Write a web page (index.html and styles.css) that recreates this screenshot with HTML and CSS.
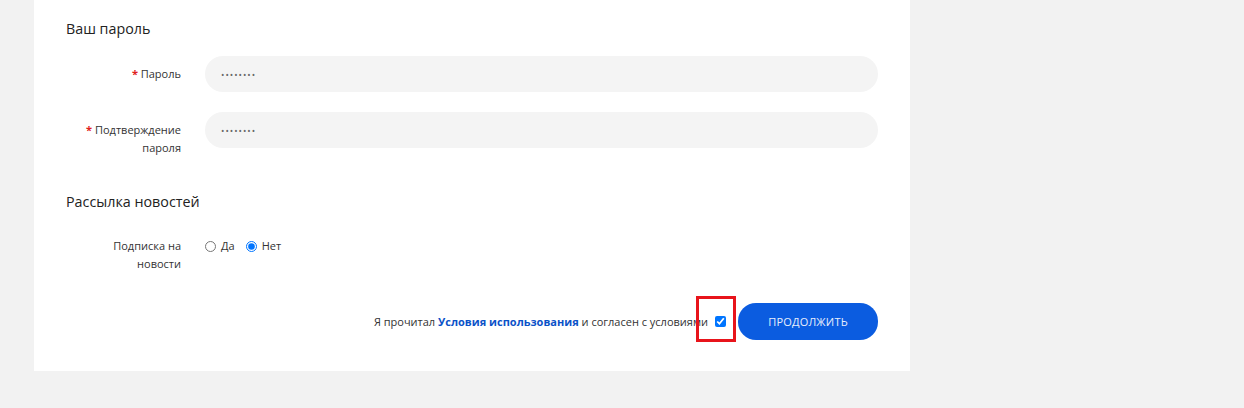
FILE: index.html
```html
<!DOCTYPE html>
<html lang="ru">
<head>
<meta charset="utf-8">
<link rel="stylesheet" href="styles.css">
</head>
<body>
<div class="panel">
  <h2 class="section-title first">Ваш пароль</h2>
  <div class="row">
    <label class="label"><span class="req">*</span> Пароль</label>
    <input class="field" type="password" value="12345678">
  </div>
  <div class="row">
    <label class="label"><span class="req">*</span> Подтверждение пароля</label>
    <input class="field" type="password" value="12345678">
  </div>

  <h2 class="section-title second">Рассылка новостей</h2>
  <div class="row radio-row">
    <label class="label">Подписка на новости</label>
    <div class="radios">
      <label class="opt"><input type="radio" name="news"> Да</label>
      <label class="opt"><input type="radio" name="news" checked> Нет</label>
    </div>
  </div>

  <div class="agree">
    <span class="agree-text">Я прочитал <a class="terms" href="#">Условия использования</a> и согласен с условиями</span>
    <span class="check-wrap">
      <input class="check" type="checkbox" checked>
      <span class="highlight"></span>
    </span>
    <button class="btn">ПРОДОЛЖИТЬ</button>
  </div>
</div>
</body>
</html>
```
FILE: styles.css
```css
html, body {
  margin: 0;
  padding: 0;
  background: #f2f2f2;
  font-family: "Open Sans", "Noto Sans", sans-serif;
  color: #333;
}
.panel {
  margin-left: 34px;
  width: 876px;
  height: 371px;
  box-sizing: border-box;
  padding: 0 32px;
  background: #fff;
}
.section-title {
  margin: 0;
  font-size: 14.3px;
  font-weight: 400;
  line-height: 20px;
  color: #222;
}
.section-title.first {
  padding-top: 19px;
  margin-bottom: 17px;
}
.section-title.second {
  padding-top: 15px;
  margin-bottom: 25px;
}
.row {
  display: flex;
  align-items: flex-start;
  gap: 24px;
  margin-bottom: 20px;
  padding-left: 15px;
}
.label {
  width: 100px;
  flex: none;
  text-align: right;
  font-size: 11px;
  line-height: 18px;
  padding-top: 9px;
  color: #333;
}
.req {
  color: #e0201b;
  font-weight: 700;
}
.field {
  flex: 1;
  height: 36px;
  box-sizing: border-box;
  border: none;
  border-radius: 18px;
  background: #f4f4f4;
  padding: 0 16px;
  font-family: "Open Sans", sans-serif;
  font-size: 9px;
  letter-spacing: 1px;
  color: #666;
  outline: none;
}
.radio-row .label {
  padding-top: 0;
}
.radio-row {
  margin-bottom: 0;
}
.radios {
  display: flex;
  gap: 11px;
  font-size: 11px;
  line-height: 18px;
}
.opt {
  display: flex;
  align-items: center;
  gap: 3px;
}
.opt input {
  margin: 0 2px 0 0;
  width: 11px;
  height: 11px;
}
.agree {
  margin-top: 30px;
  display: flex;
  justify-content: flex-end;
  align-items: center;
  font-size: 11px;
  color: #333;
}
.terms {
  color: #0b52c8;
  font-weight: 700;
  text-decoration: none;
}
.check-wrap {
  position: relative;
  display: inline-flex;
  margin-left: 7px;
  margin-right: 12px;
}
.check {
  margin: 0;
  width: 11px;
  height: 11px;
}
.highlight {
  position: absolute;
  left: -19px;
  top: -20px;
  width: 40px;
  height: 46px;
  box-sizing: border-box;
  border: 3px solid #e8141b;
}
.btn {
  width: 140px;
  height: 37px;
  border: none;
  border-radius: 18px;
  background: #0b5ce0;
  color: #e8eefc;
  font-family: "Open Sans", sans-serif;
  font-size: 11px;
  letter-spacing: 0.2px;
}
```
